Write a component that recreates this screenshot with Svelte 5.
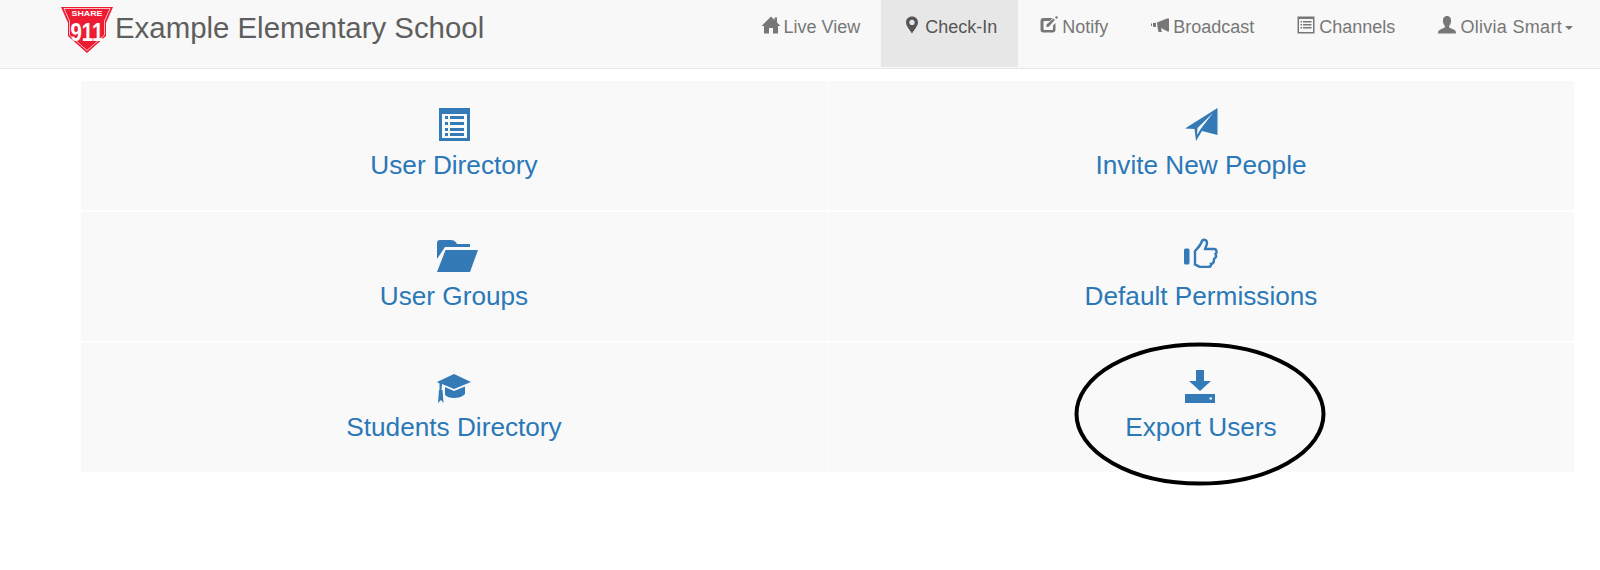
<script>
    const navItems = [
        { id: 'live', label: 'Live View' },
        { id: 'checkin', label: 'Check-In', active: true },
        { id: 'notify', label: 'Notify' },
        { id: 'broadcast', label: 'Broadcast' },
        { id: 'channels', label: 'Channels' },
        { id: 'user', label: 'Olivia Smart', caret: true }
    ]

    const tiles = [
        { id: 'directory', label: 'User Directory' },
        { id: 'invite', label: 'Invite New People' },
        { id: 'groups', label: 'User Groups' },
        { id: 'permissions', label: 'Default Permissions' },
        { id: 'students', label: 'Students Directory' },
        { id: 'export', label: 'Export Users', circled: true }
    ]
</script>

<div class="page">
    <header class="navbar">
        <div class="brand">
            <svg class="logo" width="52" height="46" viewBox="0 0 52 46">
                <polygon points="0,0 52,0 45,16 45,29 26,46 7,29 7,16" fill="#ee1c32" />
                <polygon points="3,1.500 49,1.500 43.500,14 43.500,28 26,43.500 8.500,28 8.500,14" fill="none" stroke="#fff" stroke-width="0.7" />
                <text x="26" y="9.300" textLength="31" lengthAdjust="spacingAndGlyphs" class="logo-share">SHARE</text>
                <text x="26" y="33.500" textLength="33" lengthAdjust="spacingAndGlyphs" class="logo-num">911</text>
            </svg>
            <span class="title">Example Elementary School</span>
        </div>
        <nav class="nav">
            {#each navItems as item}
                <div class="nav-item" class:active={item.active} class:user={item.caret}>
                    <svg class="nav-icon {item.id}" viewBox="0 0 20 20" width="20" height="20">
                        {#if item.id === 'live'}
                            <path d="M10 1.5 L13.5 5 V2.5 H16 V7.5 L19.5 11 H17 V18.5 H12 V13 H8 V18.5 H3 V11 H.5 Z" />
                        {:else if item.id === 'checkin'}
                            <path fill-rule="evenodd" d="M10 1.5 C6.4 1.5 4 4.2 4 7.3 C4 11.2 8 15 10 18.5 C12 15 16 11.2 16 7.3 C16 4.2 13.6 1.5 10 1.5 Z M10 4.8 A2.6 2.6 0 1 1 10 10 A2.6 2.6 0 1 1 10 4.8 Z" />
                        {:else if item.id === 'notify'}
                            <path d="M4.5 3 H13.500 L11 6 H5.500 Q4.500 6 4.500 7 V14 Q4.500 15 5.500 15 H13 Q14 15 14 14 V10.500 L16.500 8 V14.5 Q16.500 17.500 13.5 17.500 H4.5 Q1.500 17.500 1.500 14.5 V6 Q1.500 3 4.5 3 Z" />
                            <path d="M7.5 9.5 L14.5 3.5 L15.8 5 L9.5 12 H7.5 Z" />
                            <circle cx="17.500" cy="2.500" r="1.2" />
                        {:else if item.id === 'broadcast'}
                            <path d="M1 8.5 H2 V11 H1 Z M3 8 L6 7.8 V12 L3 11.7 Z M7 7.5 L17 3.5 H19 V16.5 H17.5 L11 13 L11.8 17 H8.5 L7.5 12.2 Z" />
                        {:else if item.id === 'channels'}
                            <path fill-rule="evenodd" d="M1.5 1.5 H18.5 V18.5 H1.5 Z M3 4 V17 H17 V4 Z" />
                            <path d="M4.5 6 H6 V7.5 H4.5 Z M7 6 H15.5 V7.5 H7 Z M4.5 9 H6 V10.5 H4.5 Z M7 9 H15.5 V10.5 H7 Z M4.5 12 H6 V13.5 H4.5 Z M7 12 H15.5 V13.5 H7 Z" />
                        {:else}
                            <path d="M10 1 C13 1 14.3 3.3 14 6.5 C13.8 8.5 13 10 12 11 C12 12.5 13 13 15 13.8 C17.5 14.7 19 15.5 19 18.5 H1 C1 15.5 2.5 14.7 5 13.8 C7 13 8 12.5 8 11 C7 10 6.2 8.5 6 6.5 C5.7 3.3 7 1 10 1 Z" />
                        {/if}
                    </svg>
                    <span>{item.label}</span>
                    {#if item.caret}<span class="caret"></span>{/if}
                </div>
            {/each}
        </nav>
    </header>

    <main class="grid">
        {#each tiles as tile}
            <div class="tile">
                <div class="tile-icon {tile.id}">
                    {#if tile.id === 'directory'}
                        <svg width="31" height="33" viewBox="0 0 31 33">
                            <path fill-rule="evenodd" d="M0 0 H31 V33 H0 Z M3 6 V30 H28 V6 Z" />
                            <path d="M6 8 H9 V11 H6 Z M11 8 H25 V11 H11 Z M6 14 H9 V17 H6 Z M11 14 H25 V17 H11 Z M6 20 H9 V23 H6 Z M11 20 H25 V23 H11 Z M6 25 H9 V28 H6 Z M11 25 H25 V28 H11 Z" />
                        </svg>
                    {:else if tile.id === 'invite'}
                        <svg width="33" height="33" viewBox="0 0 33 33">
                            <path d="M32.5 0 V27 L17 23 L11 33 L9.5 21 L0 20.5 Z" />
                            <path class="cut" d="M28 5 L12.5 20 L12 27 L16 20.5 Z" />
                        </svg>
                    {:else if tile.id === 'groups'}
                        <svg width="41" height="33" viewBox="0 0 41 33">
                            <path d="M0 4 Q0 1 3 1 H14 Q18 1 20 5 H33 V8 H8 L0 20 Z" />
                            <path d="M8.5 11 H41 L33 33 H0 Z" />
                        </svg>
                    {:else if tile.id === 'permissions'}
                        <svg width="34" height="30" viewBox="0 0 34 30">
                            <path d="M0 12 Q0 10.5 1.5 10.5 H4 Q5.5 10.5 5.5 12 V25 Q5.5 26.5 4 26.5 H1.5 Q0 26.5 0 25 Z" />
                            <path class="line" d="M11 13 C14 10 17 6 18 3 C19 1 23 1.500 23 5 C23 8 21 10 21 11 H30 C33 11 33 15 31.500 16 C32.500 18 32 20 30 21 C30 24 29 26 27 26 C27.500 28 26 29 24 29 H17 C14.500 29 13 27 11 26.500 Z" />
                        </svg>
                    {:else if tile.id === 'students'}
                        <svg width="34" height="29" viewBox="0 0 34 29">
                            <path d="M17 0 L34 8 L17 15 L5 10 L4.500 16 L2.500 16 L2.500 9.500 L0 8 Z" />
                            <path d="M8 13 L17 17 L28 12.500 V20 C25 23 21 24 17 24 C13 24 10 23 8 21 Z" />
                            <path d="M2 16 H5.500 L6.500 29 L4 26 L1 29 Z" />
                        </svg>
                    {:else}
                        <svg width="30" height="33" viewBox="0 0 30 33">
                            <path d="M11 0 H19 V11 H26 L15 21 L4 11 H11 Z" />
                            <path fill-rule="evenodd" d="M0 24 H30 V33 H0 Z M24.500 27.500 V29.500 H27 V27.500 Z" />
                        </svg>
                    {/if}
                </div>
                <div class="tile-label">{tile.label}</div>
                {#if tile.circled}
                    <svg class="circle" width="258" height="150" viewBox="0 0 258 150">
                        <ellipse cx="129" cy="75" rx="123.500" ry="69.500" />
                    </svg>
                {/if}
            </div>
        {/each}
    </main>
</div>

<style>
    :global(body) {
        margin: 0;
        background: #fff;
    }
    .page {
        width: 1600px;
        height: 570px;
        overflow: hidden;
        font-family: "Liberation Sans", Arial, sans-serif;
    }
    .navbar {
        display: flex;
        justify-content: space-between;
        box-sizing: border-box;
        height: 69px;
        padding: 0 6px 0 61px;
        background: #f8f8f8;
        border-bottom: 1px solid #e7e7e7;
    }
    .brand {
        display: flex;
        align-items: flex-start;
        padding-top: 7px;
    }
    .logo-share {
        font: 700 7.5px "Liberation Sans", sans-serif;
        fill: #fff;
        text-anchor: middle;
    }
    .logo-num {
        font: 700 25px "Liberation Sans", sans-serif;
        fill: #fff;
        text-anchor: middle;
    }
    .title {
        margin: 4px 0 0 2px;
        font-size: 29.4px;
        line-height: 34px;
        color: #5e5e5e;
    }
    .nav {
        display: flex;
        height: 67px;
    }
    .nav-item {
        display: flex;
        align-items: flex-start;
        gap: 3px;
        padding: 17px 21px 0;
        font-size: 18px;
        line-height: 21px;
        color: #777;
    }
    .nav-item.user {
        letter-spacing: 0.3px;
    }
    .nav-item.active {
        background: #e7e7e7;
        color: #555;
    }
    .nav-icon {
        fill: currentColor;
        flex: none;
        margin-top: -2px;
    }
    .caret {
        width: 0;
        height: 0;
        margin: 9px 0 0 0;
        border-top: 4px solid #777;
        border-left: 4.5px solid transparent;
        border-right: 4.5px solid transparent;
    }
    .grid {
        display: grid;
        grid-template-columns: 746px 746px;
        grid-auto-rows: 129px;
        gap: 2px 1px;
        margin: 12px 0 0 81px;
    }
    .tile {
        position: relative;
        display: flex;
        flex-direction: column;
        align-items: center;
        padding-top: 26px;
        box-sizing: border-box;
        background: #f9f9f9;
        color: #337ab7;
    }
    .tile-icon {
        display: flex;
        align-items: flex-end;
        height: 34px;
    }
    .tile-icon.groups {
        margin-left: 7px;
    }
    .tile-icon.export {
        margin-right: 3px;
    }
    .tile-icon.permissions {
        align-items: flex-start;
    }
    .tile-icon svg {
        display: block;
        fill: #337ab7;
    }
    .tile-icon .cut {
        fill: #f9f9f9;
    }
    .tile-icon .line {
        fill: none;
        stroke: #337ab7;
        stroke-width: 2.4;
    }
    .tile-label {
        margin-top: 7px;
        font-size: 26.2px;
        line-height: 34px;
        color: #2a78b8;
    }
    .circle {
        position: absolute;
        left: 243px;
        top: -4px;
        overflow: visible;
    }
    .circle ellipse {
        fill: none;
        stroke: #000;
        stroke-width: 4;
    }
</style>
